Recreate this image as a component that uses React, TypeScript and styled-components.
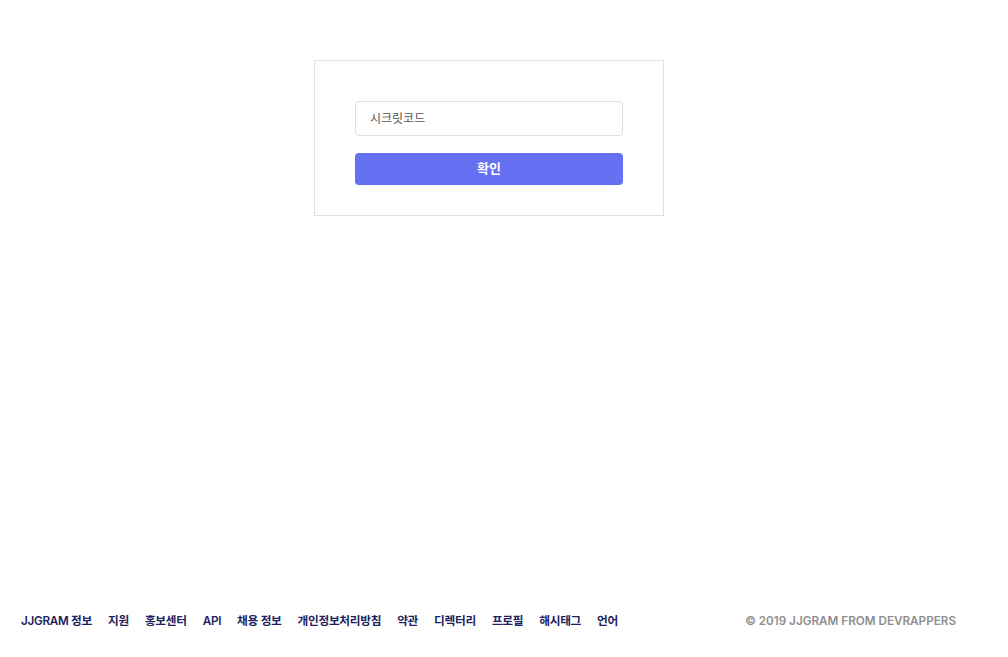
import React from "react";
import styled, { createGlobalStyle } from "styled-components";

const Global = createGlobalStyle`
  html, body { margin: 0; padding: 0; background: #fff; }
  body { font-family: "Inter", "Noto Sans CJK KR", sans-serif; }
  * { box-sizing: border-box; }
`;

const Page = styled.div`
  min-height: 657px;
  display: flex;
  flex-direction: column;
`;

const Main = styled.main`
  flex: 1;
  display: flex;
  justify-content: center;
  padding: 60px 30px 0 0;
`;

const Card = styled.form`
  width: 350px;
  height: 156px;
  border: 1px solid #e0e0e0;
  padding: 40px 40px 0;
  display: flex;
  flex-direction: column;
  gap: 17px;
`;

const Input = styled.input`
  width: 100%;
  height: 35px;
  border: 1px solid #dfdfdf;
  border-radius: 4px;
  padding: 0 14px;
  font-family: "Inter", "Noto Sans CJK KR", sans-serif;
  font-size: 12px;
  outline: none;
  &::placeholder { color: #555; }
`;

const Button = styled.button`
  width: 100%;
  height: 32px;
  border: none;
  border-radius: 4px;
  background: #6670f2;
  color: #fff;
  padding: 0 0 3px;
  font-family: "Inter", "Noto Sans CJK KR", sans-serif;
  font-size: 13px;
  font-weight: 700;
`;

const Footer = styled.footer`
  display: flex;
  justify-content: space-between;
  align-items: baseline;
  padding: 0 52px 29px 21px;
  font-size: 11.7px;
  font-weight: 600;
`;

const Links = styled.ul`
  display: flex;
  align-items: baseline;
  gap: 16px;
  list-style: none;
  margin: 0;
  padding: 0;
`;

const LinkItem = styled.li`
  color: #221f5e;
  letter-spacing: -0.3px;
`;

const Copy = styled.span`
  color: #8e8e8e;
`;

const links = ["JJGRAM 정보", "지원", "홍보센터", "API", "채용 정보", "개인정보처리방침", "약관", "디렉터리", "프로필", "해시태그", "언어"];

export default function App() {
  return (
    <Page>
      <Global />
      <Main>
        <Card onSubmit={(e) => e.preventDefault()}>
          <Input placeholder="시크릿코드" />
          <Button type="submit">확인</Button>
        </Card>
      </Main>
      <Footer>
        <Links>
          {links.map((l) => (
            <LinkItem key={l}>{l}</LinkItem>
          ))}
        </Links>
        <Copy>© 2019 JJGRAM FROM DEVRAPPERS</Copy>
      </Footer>
    </Page>
  );
}
